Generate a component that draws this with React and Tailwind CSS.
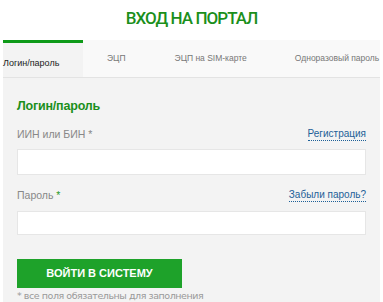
export default function App() {
  return (
    <div className="w-[383px] h-[302px] overflow-hidden bg-white font-['Liberation_Sans',sans-serif]">
      {/* Title */}
      <h1 className="h-[40px] pt-[6px] text-center text-[17px] leading-[24px] font-medium text-[#1b8f1b] tracking-[-0.95px] font-['Roboto',sans-serif]">
        ВХОД НА ПОРТАЛ
      </h1>

      {/* Tabs */}
      <div className="mx-[3px] flex h-[38px] border-b border-[#e3e3e3] bg-[#f9f9f9] leading-[12px] whitespace-nowrap">
        <div className="w-[80px] shrink-0 border-t-[3px] border-[#0e9a18] bg-[#f3f3f3] pt-[14px] text-[9px] text-[#222]">
          Логин/пароль
        </div>
        <div className="flex flex-1 items-center pb-[2px] text-[8.5px] text-[#777]">
          <span className="ml-[24px]">ЭЦП</span>
          <span className="ml-[49px]">ЭЦП на SIM-карте</span>
          <span className="ml-[48px]">Одноразовый пароль</span>
        </div>
      </div>

      {/* Form */}
      <div className="mx-[3px] h-[224px] bg-[#f3f3f3] px-[14px] pt-[19px]">
        <h2 className="text-[12.5px] font-bold text-[#1b8f1b] leading-[18px] tracking-[-0.2px]">
          Логин/пароль
        </h2>

        <div className="mt-[12px] flex items-end justify-between">
          <span className="text-[10.5px] leading-[14px] text-[#888]">
            ИИН или БИН <span className="text-[#888]">*</span>
          </span>
          <a className="text-[10px] text-[#1d5f97] border-b border-dotted border-[#1d5f97] leading-[12px]">
            Регистрация
          </a>
        </div>
        <div className="mt-[8px] h-[26px] border border-[#e6e6e6] bg-white" />

        <div className="mt-[13px] flex items-end justify-between">
          <span className="text-[10.5px] leading-[14px] text-[#888]">
            Пароль <span className="text-[#2a9a2a]">*</span>
          </span>
          <a className="text-[10px] text-[#1d5f97] border-b border-dotted border-[#1d5f97] leading-[12px]">
            Забыли пароль?
          </a>
        </div>
        <div className="mt-[9px] h-[24px] border border-[#e6e6e6] bg-white" />

        <button className="mt-[24px] h-[29px] w-[165px] bg-[#1ea22a] text-[11px] font-bold text-white">
          ВОЙТИ В СИСТЕМУ
        </button>
        <p className="mt-[2px] text-[9.5px] leading-[12px] text-[#999] font-['DejaVu_Sans',sans-serif] tracking-[-0.45px]">
          * все поля обязательны для заполнения
        </p>
      </div>
    </div>
  );
}
